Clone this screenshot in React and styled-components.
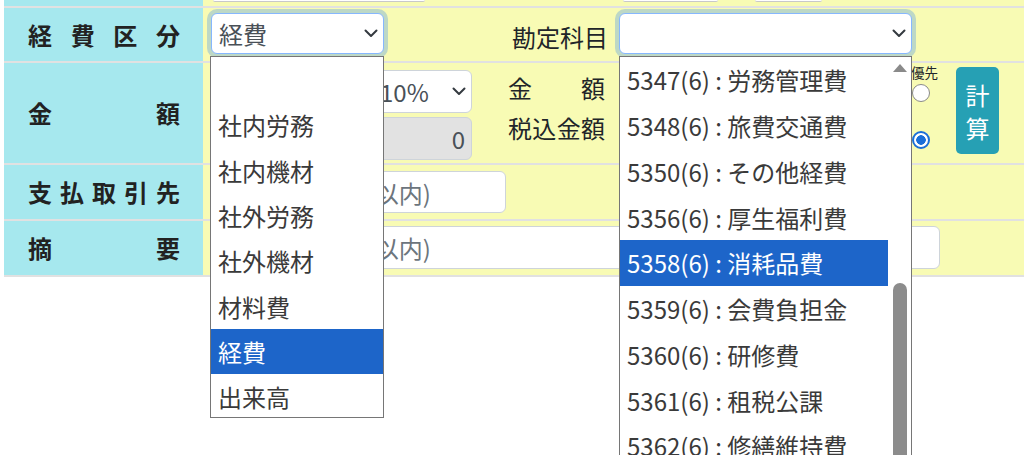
import React from "react";
import styled, { createGlobalStyle } from "styled-components";

const GlobalStyle = createGlobalStyle`
  html { overflow: hidden; }
  html, body { margin: 0; padding: 0; background: #fff; }
  body {
    min-height: 100vh;
    font-family: "Noto Sans CJK JP", "Noto Sans", sans-serif;
    color: #212529;
  }
`;

const Page = styled.div`
  padding-left: 4px;
`;

const Row = styled.div`
  display: grid;
  grid-template-columns: 199px 1fr;
  height: ${(p) => p.$h}px;
  border-bottom: 2px solid #e1e1e1;
`;

const Label = styled.div`
  background: #a6e8ee;
  display: flex;
  align-items: center;
  padding: 0 23px 0 24px;
`;

const LabelText = styled.div`
  flex: 1;
  font-size: 24px;
  font-weight: 700;
  color: #222;
  text-align: justify;
  text-align-last: justify;
  line-height: 1;
`;

const Cell = styled.div`
  background: #f8fbb4;
  display: flex;
  align-items: flex-start;
  padding: ${(p) => p.$pt || 0}px 0 0 8px;
`;

const Stub = styled.div`
  height: 1px;
  width: ${(p) => p.$w}px;
  margin-left: ${(p) => p.$ml}px;
  background: #fff;
  border-bottom: 1px solid #c8c8c8;
  border-radius: 0 0 4px 4px;
`;

const SelectBox = styled.div`
  position: relative;
  box-sizing: border-box;
  width: ${(p) => p.$w}px;
  height: ${(p) => p.$h}px;
  flex-shrink: 0;
  background: #fff;
  border: 1px solid ${(p) => (p.$focus ? "#86b7fe" : "#ced4da")};
  border-radius: 6px;
  box-shadow: ${(p) => (p.$focus ? "0 0 0 4px rgba(13,110,253,.25)" : "none")};
  display: flex;
  align-items: center;
  justify-content: space-between;
  padding: 0 5px 0 7px;
  font-size: 24px;
  color: #495057;
`;

const Dropdown = styled.div`
  position: absolute;
  z-index: 10;
  top: 42px;
  left: ${(p) => p.$left}px;
  width: ${(p) => p.$w}px;
  height: ${(p) => p.$h}px;
  box-sizing: border-box;
  background: #fff;
  border: 1px solid #767676;
  display: flex;
  overflow: hidden;
`;

const OptionList = styled.div`
  flex: 1;
  display: flex;
  flex-direction: column;
`;

const Option = styled.div`
  flex-shrink: 0;
  height: ${(p) => p.$h}px;
  display: flex;
  align-items: center;
  padding-left: 7px;
  font-size: 24px;
  white-space: nowrap;
  color: ${(p) => (p.$sel ? "#fff" : "#3a3a3a")};
  background: ${(p) => (p.$sel ? "#1d65c9" : "transparent")};
`;

const ScrollTrack = styled.div`
  width: 23px;
  display: flex;
  flex-direction: column;
  align-items: center;
`;

const ScrollArrow = styled.div`
  margin-top: 7px;
  width: 0;
  height: 0;
  border-left: 7px solid transparent;
  border-right: 7px solid transparent;
  border-bottom: 8px solid #8a8a8a;
`;

const ScrollThumb = styled.div`
  margin-top: 211px;
  width: 14px;
  flex: 1;
  background: #8c8c8c;
  border-radius: 7px 7px 0 0;
`;

const FieldLabel = styled.div`
  width: 224px;
  flex-shrink: 0;
  text-align: right;
  font-size: 24px;
  line-height: 41px;
  padding-top: 3px;
  color: #212529;
  margin-right: 11px;
`;

const Stack = styled.div`
  display: flex;
  flex-direction: column;
  gap: 4px;
  width: ${(p) => p.$w}px;
  margin-left: ${(p) => p.$ml || 0}px;
  flex-shrink: 0;
`;

const Line = styled.div`
  display: flex;
  gap: 4px;
`;

const Input = styled.input`
  box-sizing: border-box;
  width: ${(p) => p.$w}px;
  height: ${(p) => p.$h}px;
  flex-shrink: 0;
  border: 1px solid #ced4da;
  border-radius: 6px;
  background: ${(p) => (p.$muted ? "#e2e2e2" : "#fff")};
  font-family: inherit;
  font-size: 24px;
  color: #495057;
  padding: 0 ${(p) => (p.$right ? 6 : 8)}px 0 8px;
  text-align: ${(p) => (p.$right ? "right" : "left")};
  outline: none;
  &::placeholder { color: #6c757d; }
`;

const JustLabel = styled.div`
  font-size: 24px;
  line-height: 36px;
  color: #212529;
  text-align: justify;
  text-align-last: justify;
`;

const Spacer = styled.div`
  flex: 1;
`;

const RadioCol = styled.div`
  width: 25px;
  flex-shrink: 0;
  display: flex;
  flex-direction: column;
  margin-top: -4px;
`;

const Small = styled.div`
  font-size: 13.5px;
  line-height: 13px;
  color: #212529;
  white-space: nowrap;
  margin-left: -1px;
`;

const Radio = styled.span`
  display: block;
  box-sizing: border-box;
  width: 18px;
  height: 18px;
  border-radius: 50%;
  margin-top: ${(p) => p.$mt}px;
  border: ${(p) => (p.$checked ? "2px solid #1b6fd8" : "1px solid #8a8a8a")};
  background: ${(p) =>
    p.$checked ? "radial-gradient(circle, #1b6fd8 0 4.5px, #fff 5px)" : "#fff"};
`;

const CalcButton = styled.button`
  margin: -3px 25px 0 19px;
  width: 43px;
  height: 87px;
  flex-shrink: 0;
  border: none;
  border-radius: 5px;
  background: #26a0b4;
  color: #fff;
  font-family: inherit;
  font-size: 24px;
  line-height: 33px;
  padding: 0;
  display: flex;
  flex-direction: column;
  align-items: center;
  justify-content: center;
`;

const Chevron = () => (
  <svg width="14" height="9" viewBox="0 0 14 9">
    <path
      d="M1.5 1.5l5.5 5.5 5.5-5.5"
      fill="none"
      stroke="#343a40"
      strokeWidth="2"
      strokeLinecap="round"
      strokeLinejoin="round"
    />
  </svg>
);

const kubun = ["", "社内労務", "社内機材", "社外労務", "社外機材", "材料費", "経費", "出来高"];

const kamoku = [
  "5347(6) : 労務管理費",
  "5348(6) : 旅費交通費",
  "5350(6) : その他経費",
  "5356(6) : 厚生福利費",
  "5358(6) : 消耗品費",
  "5359(6) : 会費負担金",
  "5360(6) : 研修費",
  "5361(6) : 租税公課",
  "5362(6) : 修繕維持費",
];

export default function App() {
  return (
    <Page>
      <GlobalStyle />

      <Row $h={6}>
        <Label />
        <Cell $pt={0}>
          <Stub $w={212} $ml={2} />
          <Stub $w={95} $ml={198} />
          <Stub $w={67} $ml={37} />
        </Cell>
      </Row>

      <Row $h={53}>
        <Label>
          <LabelText>経費区分</LabelText>
        </Label>
        <Cell $pt={5}>
          <SelectBox $w={173} $h={41} $focus>
            <span>経費</span>
            <Chevron />
            <Dropdown $left={-2} $w={174} $h={362}>
              <OptionList>
                {kubun.map((k, i) => (
                  <Option key={i} $h={45.3} $sel={k === "経費"}>
                    {k}
                  </Option>
                ))}
              </OptionList>
            </Dropdown>
          </SelectBox>
          <FieldLabel>勘定科目</FieldLabel>
          <SelectBox $w={293} $h={41} $focus>
            <span />
            <Chevron />
            <Dropdown $left={-1} $w={293} $h={400}>
              <OptionList>
                {kamoku.map((k) => (
                  <Option key={k} $h={45.75} $sel={k.startsWith("5358")}>
                    {k}
                  </Option>
                ))}
              </OptionList>
              <ScrollTrack>
                <ScrollArrow />
                <ScrollThumb />
              </ScrollTrack>
            </Dropdown>
          </SelectBox>
        </Cell>
      </Row>

      <Row $h={100}>
        <Label>
          <LabelText>金額</LabelText>
        </Label>
        <Cell $pt={7}>
          <Stack $w={261}>
            <Line>
              <Input $w={157} $h={43} readOnly />
              <SelectBox $w={100} $h={43}>
                <span>10%</span>
                <Chevron />
              </SelectBox>
            </Line>
            <Input $w={261} $h={43} $muted $right readOnly value="0" />
          </Stack>
          <Stack $w={97} $ml={36}>
            <JustLabel>金額</JustLabel>
            <JustLabel>税込金額</JustLabel>
          </Stack>
          <Spacer />
          <RadioCol>
            <Small>優先</Small>
            <Radio $mt={5} />
            <Radio $mt={29} $checked />
          </RadioCol>
          <CalcButton>
            <span>計</span>
            <span>算</span>
          </CalcButton>
        </Cell>
      </Row>

      <Row $h={54}>
        <Label>
          <LabelText>支払取引先</LabelText>
        </Label>
        <Cell $pt={6}>
          <Input $w={295} $h={42} placeholder="(全角で20文字以内)" readOnly />
        </Cell>
      </Row>

      <Row $h={54}>
        <Label>
          <LabelText>摘要</LabelText>
        </Label>
        <Cell $pt={5}>
          <Input $w={729} $h={43} placeholder="(全角で40文字以内)" readOnly />
        </Cell>
      </Row>
    </Page>
  );
}
